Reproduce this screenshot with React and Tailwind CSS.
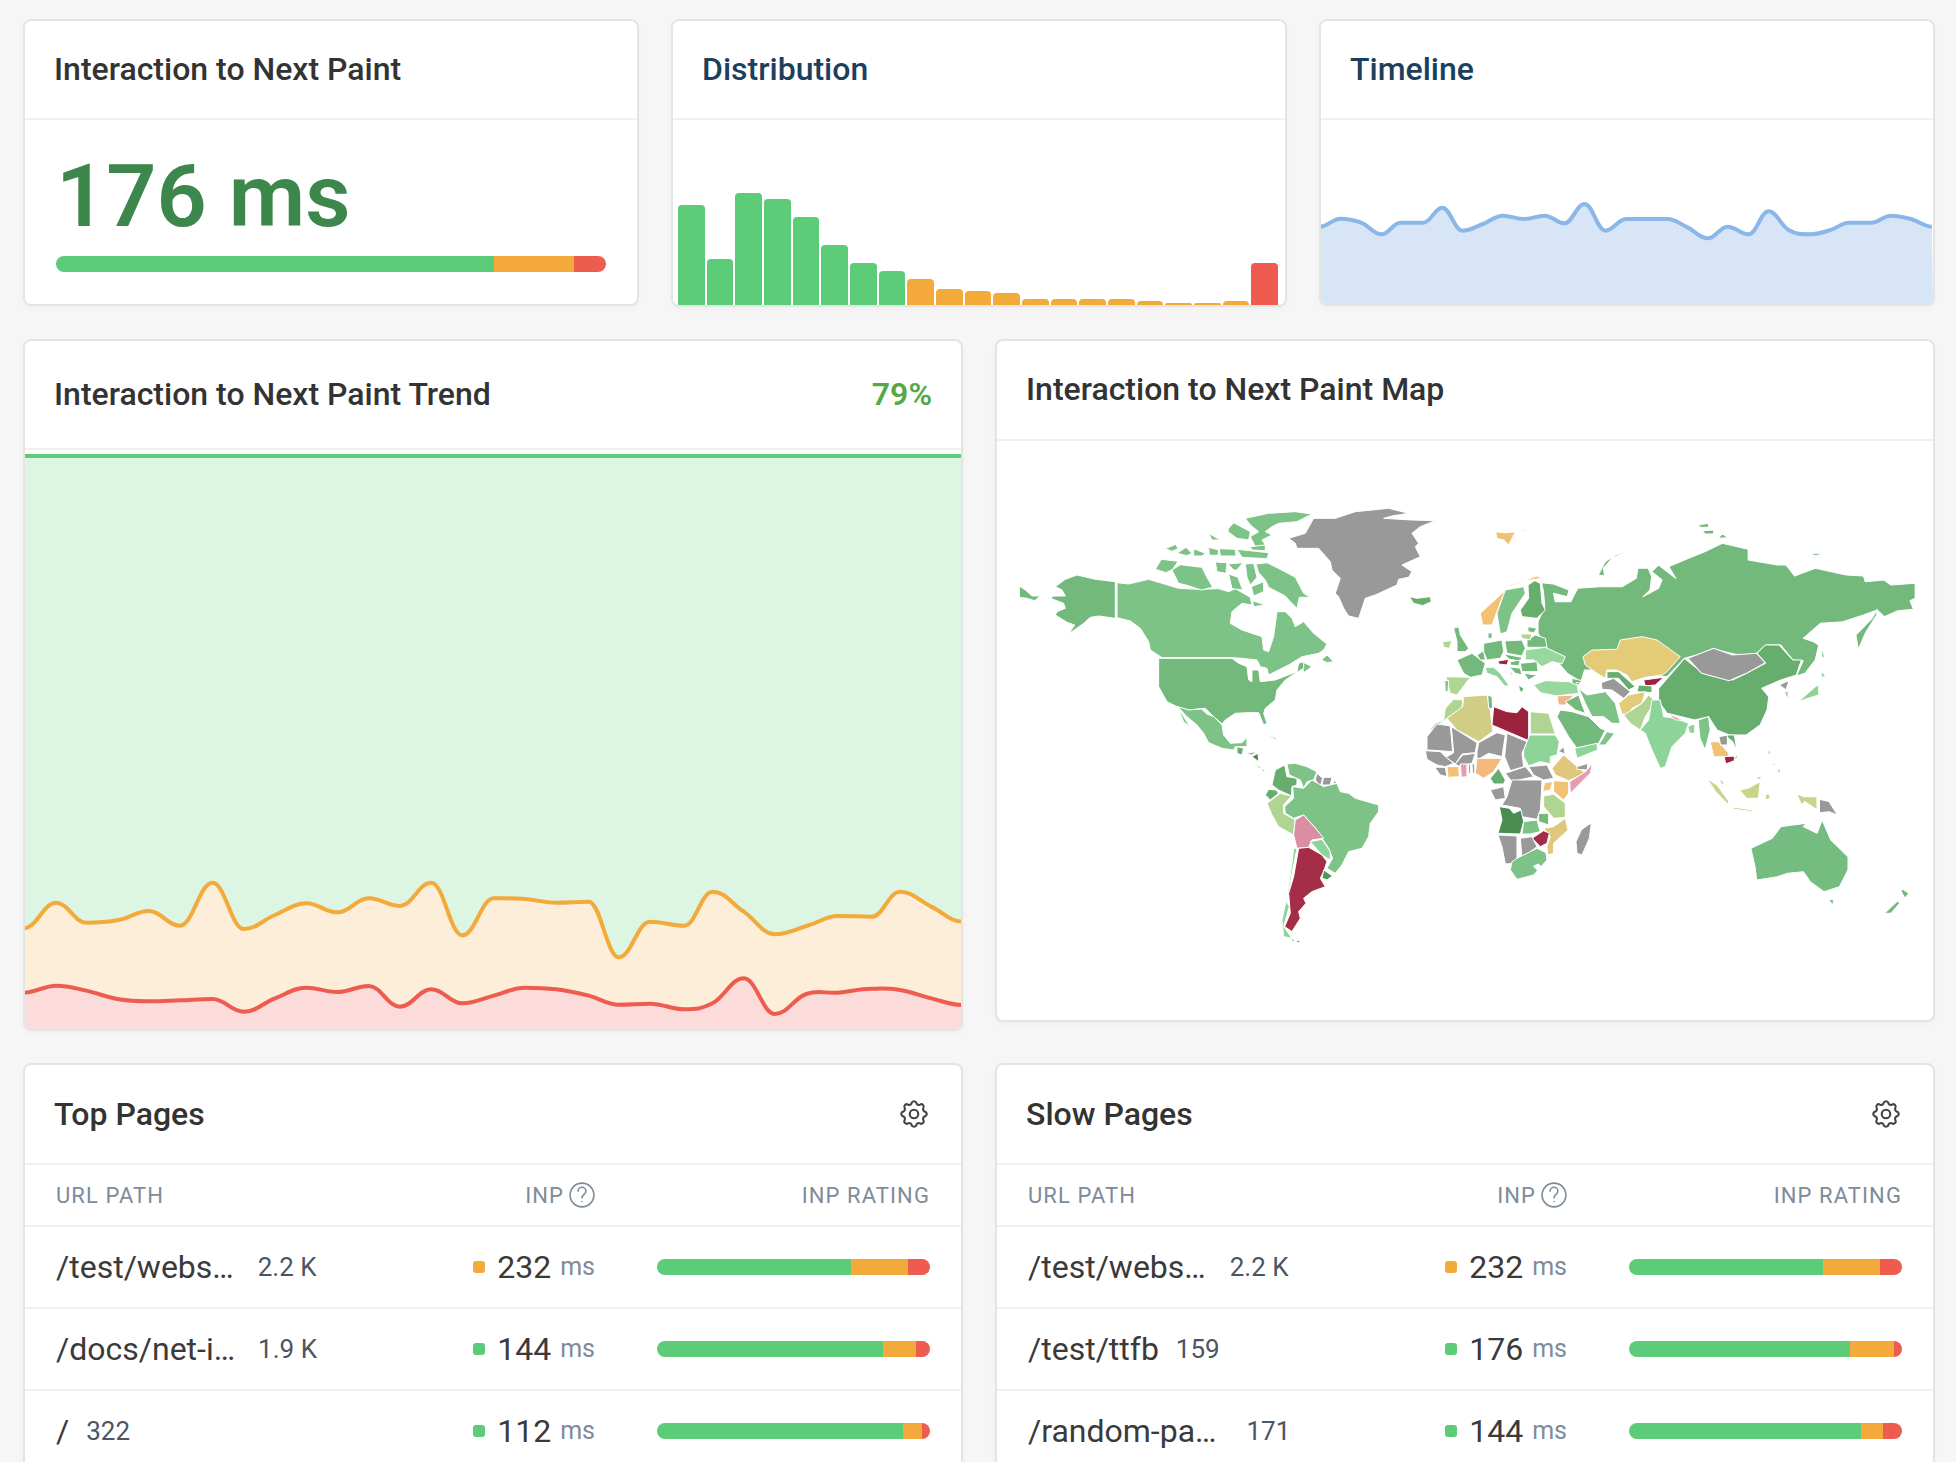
import { TbSettings } from "react-icons/tb";

const GREEN = "#5dcc78";
const AMBER = "#f4a93b";
const RED = "#ee5c4f";

// monotone cubic through points, flat at local peaks
const smooth = (pts) => {
    const slope = (i) => {
        if (i === 0 || i === pts.length - 1) return 0;
        const a = pts[i][1] - pts[i - 1][1];
        const b = pts[i + 1][1] - pts[i][1];
        if (a * b <= 0) return 0;
        return (a + b) / (pts[i + 1][0] - pts[i - 1][0]);
    };
    let d = `M${pts[0][0]},${pts[0][1]}`;
    for (let i = 1; i < pts.length; i++) {
        const [x0, y0] = pts[i - 1];
        const [x1, y1] = pts[i];
        const h = (x1 - x0) * 0.4;
        d += ` C${x0 + h},${y0 + slope(i - 1) * h} ${x1 - h},${y1 - slope(i) * h} ${x1},${y1}`;
    }
    return d;
};

const orangeLine = [[38,295],[90,218],[138,278],[190,270],[238,243],[288,287],[340,158],[390,297],[440,255],[490,220],[540,247],[590,205],[640,228],[690,158],[740,316],[790,205],[840,207],[890,218],[942,215],[990,382],[1040,275],[1095,287],[1140,185],[1190,245],[1240,313],[1295,285],[1340,258],[1395,260],[1440,185],[1490,230],[1540,275]];
const redLine = [[38,488],[90,467],[138,482],[190,508],[238,514],[288,511],[340,507],[390,545],[440,505],[490,473],[540,486],[590,468],[640,530],[690,478],[740,520],[790,497],[840,473],[890,478],[942,497],[990,524],[1040,521],[1095,538],[1140,520],[1190,445],[1240,552],[1290,492],[1340,488],[1395,476],[1440,480],[1490,505],[1540,525]];
const blueLine = [[48,680],[97,656],[146,668],[195,703],[240,668],[295,668],[340,623],[388,692],[437,672],[485,647],[535,657],[585,647],[632,670],[680,612],[730,692],[780,657],[828,657],[878,657],[927,683],[975,715],[1022,680],[1072,703],[1120,634],[1168,690],[1218,703],[1268,690],[1312,668],[1365,668],[1412,647],[1460,657],[1510,680]];

const toTrend = (p) => [p[0] / 1.6 - 25, 830 + p[1] / 3 - 450];
const toTimeline = (p) => [1300 + p[0] / 2.39 - 1321, p[1] / 3 - 120];

const bars = [
    [100, GREEN], [46, GREEN], [112, GREEN], [106, GREEN], [88, GREEN], [60, GREEN], [42, GREEN], [34, GREEN],
    [26, AMBER], [16, AMBER], [14, AMBER], [12, AMBER], [6, AMBER], [6, AMBER], [6, AMBER], [6, AMBER], [4, AMBER], [2, AMBER], [2, AMBER], [4, AMBER],
    [42, RED],
];

const C = {
    can: "#7dc287", usa: "#73b97c", grey: "#999999", chn: "#66ad6e", arg: "#a42e48", lby: "#9b233e", kaz: "#e4cb78",
    alg: "#d0ce85", lime: "#b0d592", pink: "#d98ea3", ago: "#4a8d50", amb: "#f2c173", nga: "#f3ba7c", mint: "#8ed498",
    som: "#e69db0", ury: "#4a9a5a", pale: "#98d89f", ind: "#c9d38a", eth: "#e0c77c", syr: "#f0b58a",
};

// coordinates read off the reference, one group per crop
const americas = [
    [C.usa, "160,290 190,268 225,255 280,268 340,275 340,385 290,378 265,382 245,400 200,432 218,405 195,397 160,375 165,365 190,355 185,340 145,325 155,318 190,318 180,300 155,287"],
    [C.usa, "52,288 70,300 90,318 115,318 98,332 75,325 52,322"],
    [C.can, "345,278 380,282 440,268 480,280 530,295 590,298 650,296 680,305 700,296 745,322 750,345 720,340 690,365 685,400 720,420 780,440 785,480 800,485 815,440 825,365 850,365 870,385 880,410 905,395 935,430 975,462 965,480 950,490 900,500 860,525 800,555 795,535 775,530 765,510 720,505 690,503 480,503 445,480 440,455 415,415 385,393 345,383"],
    [C.can, "730,85 800,70 880,65 930,72 885,95 830,100 810,110 790,125 810,135 780,150 790,165 760,170 745,140 770,125 745,105"],
    [C.can, "680,115 695,98 745,125 740,150 705,145 678,125"],
    [C.can, "620,130 655,150 630,150"],
    [C.can, "745,170 790,165 790,182 750,180"],
    [C.can, "490,176 522,163 528,176 510,184"],
    [C.can, "525,190 552,172 570,190 555,197"],
    [C.can, "575,176 610,190 600,198 575,198"],
    [C.can, "620,172 650,180 648,196 622,196"],
    [C.can, "652,176 700,178 702,198 655,198"],
    [C.can, "705,178 800,188 796,206 720,202"],
    [C.can, "460,238 478,208 528,214 512,238 492,248"],
    [C.can, "510,240 535,224 600,232 615,262 632,292 598,300 555,286 530,280"],
    [C.can, "640,216 675,218 672,250 645,245"],
    [C.can, "678,222 722,218 705,240 695,240"],
    [C.can, "680,252 708,262 722,300 690,296"],
    [C.can, "730,222 755,220 765,262 745,285 735,262"],
    [C.can, "762,222 795,218 835,238 880,262 905,310 925,322 892,322 885,355 865,335 850,318 800,292 790,270 770,248"],
    [C.can, "748,290 785,275 785,305 755,318"],
    [C.can, "752,332 790,345 755,350"],
    [C.can, "958,510 975,495 995,515 975,518"],
    [C.can, "900,515 930,530 905,548"],
    [C.grey, "860,145 910,130 935,85 1000,85 1060,65 1160,55 1220,70 1170,78 1145,85 1230,90 1300,92 1255,110 1230,130 1250,160 1240,170 1255,200 1200,225 1230,245 1220,262 1190,268 1185,285 1120,315 1090,325 1070,385 1040,378 1025,355 1010,320 1000,310 1015,265 990,240 985,215 950,175 885,175 880,160"],
    [C.chn, "1222,320 1245,325 1285,320 1288,335 1262,347 1235,340"],
    [C.usa, "470,505 690,505 710,520 735,530 740,570 750,575 750,540 770,540 775,575 820,570 885,545 890,520 905,515 905,535 880,550 850,570 825,600 820,630 790,655 785,670 795,700 785,705 770,668 740,668 700,670 670,690 660,702 635,680 610,655 560,660 525,650 495,635 470,590"],
    [C.can, "527,650 560,660 598,657 615,672 635,680 660,705 665,735 685,760 720,758 735,742 735,770 700,770 695,780 660,775 620,758 605,730 585,705 555,680"],
    [C.can, "527,652 545,680 565,712 545,695"],
    [C.chn, "705,770 725,775 720,795 705,790"],
    [C.grey, "730,790 765,785 750,795"],
    ["#3f8a4a", "750,800 768,790 770,815"],
    [C.can, "760,820 780,835 772,835"],
    [C.arg, "778,835 792,845 785,845"],
    [C.pink, "787,730 825,745 820,748"],
    [C.chn, "820,840 848,825 855,860 885,865 885,885 870,890 868,918 830,900 810,885"],
    [C.can, "855,822 880,820 915,830 945,845 935,870 915,875 905,895 895,870 862,855"],
    [C.grey, "945,850 962,865 955,890 940,870"],
    [C.grey, "965,862 990,862 985,885 960,885"],
    [C.grey, "995,870 1010,885 995,880"],
    [C.chn, "800,898 822,900 830,910 805,930 790,915"],
    [C.lime, "795,940 835,910 868,918 845,945 845,970 880,990 875,1035 830,1010 810,975"],
    [C.can, "872,890 905,895 930,870 965,890 1005,880 1015,905 1040,910 1060,925 1130,945 1130,965 1105,1000 1100,1040 1080,1075 1040,1085 1020,1125 1000,1150 975,1135 992,1105 980,1075 960,1045 945,1020 905,975 875,985 850,970 848,950 875,925"],
    [C.pink, "880,990 905,975 945,1020 965,1045 930,1050 920,1072 885,1075 875,1035"],
    [C.mint, "925,1055 960,1048 985,1085 985,1110 960,1095"],
    [C.mint, "875,1075 885,1075 870,1150 860,1210 850,1230 862,1250 845,1310 870,1345 845,1340 840,1290 855,1220 870,1120"],
    [C.arg, "890,1075 920,1072 960,1095 975,1115 965,1145 955,1165 970,1190 930,1205 905,1225 912,1240 890,1265 895,1285 870,1325 848,1310 865,1270 860,1210 875,1160"],
    [C.ury, "965,1140 992,1158 975,1170 960,1165"],
    [C.mint, "870,1345 880,1355 868,1355"],
    [C.arg, "885,1350 900,1358 885,1358"],
];

const asia = [
    [C.usa, "395,395 415,350 410,300 405,278 440,282 485,300 480,320 440,310 445,335 490,335 510,295 575,290 640,290 680,265 685,235 715,235 725,260 720,300 700,320 745,295 755,270 725,245 745,225 795,265 775,230 820,210 880,185 930,160 1005,178 1005,210 1090,225 1115,225 1140,258 1200,235 1290,255 1340,258 1345,275 1400,270 1420,285 1490,280 1490,325 1475,332 1485,358 1440,362 1400,380 1380,360 1340,375 1280,395 1215,400 1165,445 1195,455 1210,465 1200,510 1170,550 1145,558 1165,512 1135,510 1100,465 1060,465 1050,495 1025,490 1000,500 915,480 875,490 820,505 770,560 600,540 530,540 520,575 480,550 430,490 395,430"],
    [C.usa, "1318,435 1365,385 1380,358 1378,375 1345,430 1325,478"],
    [C.usa, "570,255 590,215 620,195 680,172 610,205 585,235 588,258"],
    [C.usa, "860,105 890,100 890,112 865,112"],
    [C.usa, "872,122 905,120 905,132 880,132"],
    [C.usa, "918,145 930,130 945,143"],
    [C.usa, "1182,190 1230,190 1200,197"],
    [C.amb, "272,125 300,128 330,125 310,165 295,150 275,145"],
    [C.amb, "340,120 380,118 350,125"],
    [C.chn, "745,595 770,565 820,505 850,530 895,555 960,570 1000,550 1055,520 1030,490 1055,465 1095,465 1135,510 1160,510 1145,555 1100,570 1045,595 1065,620 1060,660 1040,705 1000,735 950,735 915,720 890,680 850,690 770,670 745,635"],
    [C.grey, "830,505 905,475 960,495 1030,490 1055,518 1000,550 950,572 870,550"],
    [C.grey, "1095,585 1125,570 1115,600"],
    [C.mint, "1110,605 1122,605 1120,630"],
    [C.mint, "1150,635 1200,590 1210,585 1210,615 1180,625"],
    [C.mint, "1215,545 1230,555 1220,565"],
    [C.mint, "1220,470 1228,505 1218,500"],
    [C.can, "860,690 890,680 895,720 880,780 865,745"],
    [C.mint, "830,710 850,700 850,730 835,730"],
    [C.amb, "895,755 920,755 950,790 945,800 905,800"],
    [C.chn, "935,735 965,735 975,800 950,830 975,790 960,755"],
    [C.grey, "920,740 945,735 945,765 925,765"],
    [C.lby, "935,800 965,798 965,812 940,822"],
    [C.ind, "885,865 915,885 950,935 945,942 910,905"],
    [C.ind, "955,950 1018,960 1018,965 965,958"],
    [C.ind, "980,900 1005,895 1040,875 1035,925 1000,925"],
    [C.mint, "1020,865 1045,858 1040,868"],
    [C.mint, "920,860 935,880 928,885"],
    [C.ind, "1055,915 1065,910 1070,925 1055,930"],
    [C.ind, "1145,910 1165,920 1205,920 1205,960 1170,935 1160,945"],
    [C.grey, "1212,928 1240,935 1265,975 1240,965 1212,968"],
    [C.mint, "1065,770 1070,790 1062,795"],
    [C.mint, "1075,815 1085,825 1078,828"],
    [C.mint, "1090,840 1100,835 1095,855"],
    ["#75bc80", "1013,1075 1075,1045 1100,1010 1135,1005 1175,1000 1165,1010 1205,1030 1220,990 1245,1050 1295,1100 1295,1140 1270,1190 1225,1205 1185,1175 1165,1145 1120,1150 1090,1160 1030,1170 1025,1130"],
    ["#75bc80", "1238,1228 1255,1230 1250,1245"],
    [C.usa, "1450,1195 1472,1210 1460,1225 1450,1205"],
    [C.usa, "1400,1270 1440,1232 1445,1240 1420,1270"],
];

const emea = [
    [C.lime, "62,245 90,242 82,265 65,262"],
    [C.usa, "95,205 110,200 115,225 140,265 130,275 105,275 105,245"],
    [C.usa, "105,300 150,280 190,310 180,345 145,352 125,340"],
    [C.usa, "165,285 185,272 190,300 175,300"],
    [C.lime, "72,350 145,352 120,385 105,405 85,400"],
    [C.can, "68,362 80,362 78,395 70,395"],
    [C.amb, "175,160 240,100 260,85 265,75 345,48 362,55 310,62 262,80 240,115 210,195 182,195"],
    [C.can, "250,90 305,80 310,100 270,160 255,215 235,222 225,160"],
    [C.chn, "318,75 338,62 355,70 360,130 370,150 345,175 300,170 295,150 320,115"],
    [C.usa, "198,220 210,218 210,235 198,235"],
    [C.usa, "185,250 240,240 245,275 235,295 195,300 185,275"],
    [C.usa, "248,243 300,240 310,265 300,288 255,280"],
    [C.usa, "315,240 340,225 370,235 375,262 315,262"],
    [C.usa, "318,200 345,205 335,218 318,215"],
    [C.lime, "295,222 330,222 325,240 300,235"],
    [C.pale, "310,270 370,262 430,290 420,312 390,305 360,320 335,300 310,300"],
    [C.usa, "295,310 345,305 348,335 300,335"],
    [C.usa, "245,282 262,285 300,292 295,303 262,298"],
    [C.mint, "190,322 215,322 235,340 262,378 248,378 225,350 195,340"],
    [C.lby, "228,303 260,298 255,315 230,312"],
    [C.usa, "265,305 295,300 290,318 265,315"],
    [C.usa, "305,340 345,345 320,360"],
    [C.usa, "262,320 295,325 300,345 280,340"],
    [C.chn, "290,375 305,385 300,398 292,390"],
    [C.amb, "258,332 272,340 270,348"],
    [C.pale, "335,375 370,362 440,365 465,372 470,400 405,408 355,398"],
    [C.syr, "405,408 455,405 430,435 410,435"],
    [C.usa, "430,425 470,405 490,460 460,450"],
    [C.can, "470,385 495,405 550,395 580,430 595,490 570,490 545,470 510,470 490,430"],
    [C.usa, "405,470 415,450 450,455 500,470 535,505 550,510 530,550 465,565 440,530"],
    [C.mint, "458,565 525,550 527,570 465,595"],
    [C.can, "530,555 555,515 578,520 550,555"],
    [C.usa, "450,355 480,362 470,375 450,370"],
    [C.lby, "462,368 472,368 470,376"],
    [C.kaz, "483,290 510,270 585,268 595,240 660,230 705,240 775,290 735,335 720,345 670,352 630,365 615,345 585,330 555,330 550,355 525,340 490,315"],
    [C.chn, "555,335 590,335 640,380 620,390 590,355 555,355"],
    [C.grey, "538,368 575,355 625,395 605,415 570,390 540,388"],
    [C.lby, "665,360 725,352 700,375 670,378"],
    [C.chn, "650,375 690,378 690,398 645,395"],
    [C.kaz, "590,430 620,405 670,395 660,430 630,445 625,465 600,462"],
    [C.lime, "605,465 630,450 660,430 680,405 700,425 670,470 655,510 625,490"],
    [C.mint, "690,420 715,420 725,470 760,475 800,490 790,520 750,560 730,620 715,625 690,570 670,520 655,510 680,480"],
    [C.som, "738,462 785,480 760,480"],
    [C.lime, "15,520 40,490 65,480 70,445 95,418 122,420 120,445 75,475"],
    [C.alg, "75,475 122,440 125,410 195,405 205,450 212,515 170,545 105,510"],
    [C.usa, "197,405 210,410 212,445 200,445"],
    [C.lby, "215,440 255,455 285,458 300,440 320,455 320,542 250,512 210,495"],
    [C.lime, "325,455 380,460 400,522 325,522"],
    [C.mint, "323,525 400,525 412,545 405,585 385,590 385,612 355,605 320,618 305,590 305,570"],
    [C.grey, "15,530 45,492 85,498 92,575 50,572 15,570"],
    [C.grey, "88,500 165,548 160,578 120,582 100,612 72,592 95,578"],
    [C.grey, "170,548 225,518 250,525 240,590 200,580 165,600 165,575"],
    [C.grey, "255,520 315,545 300,580 305,620 265,632 248,590"],
    [C.grey, "10,572 55,575 72,592 95,610 70,620 45,615 15,598"],
    [C.grey, "38,622 70,622 75,650 55,645"],
    [C.grey, "100,612 122,585 160,580 150,610 110,618"],
    [C.amb, "75,620 110,620 112,650 78,652"],
    [C.som, "115,612 135,612 135,650 118,652"],
    [C.grey, "140,612 146,612 146,640 140,640"],
    [C.grey, "150,612 158,612 158,640 152,640"],
    [C.nga, "165,595 240,595 215,635 185,655 160,640"],
    [C.chn, "230,625 250,660 245,672 215,672 205,655"],
    [C.grey, "250,640 310,620 335,650 270,665"],
    [C.grey, "320,620 375,615 395,655 365,660 335,645"],
    [C.eth, "390,625 425,585 460,615 490,640 440,662 400,645"],
    [C.grey, "410,575 425,560 430,582"],
    [C.grey, "465,620 498,610 495,630 465,628"],
    [C.som, "512,610 505,640 465,680 445,700 443,665 490,635"],
    [C.amb, "395,662 440,665 440,700 425,720 395,695"],
    [C.amb, "368,668 392,665 385,690 362,695"],
    [C.lime, "365,708 395,703 430,730 430,772 395,775 365,740"],
    [C.grey, "270,660 360,660 358,705 355,750 345,778 300,770 295,745 240,735 255,710"],
    [C.grey, "205,690 245,680 250,715 220,720"],
    [C.ago, "232,740 262,745 275,760 297,750 305,785 295,822 228,820 240,780"],
    [C.usa, "350,760 380,760 380,795 350,785"],
    [C.can, "305,785 345,780 355,815 325,822 300,822"],
    [C.ury, "395,795 402,797 400,812 395,812"],
    [C.eth, "365,805 395,800 430,775 438,810 395,850 395,880 378,885 375,860 385,830"],
    [C.arg, "330,835 365,812 382,820 375,850 355,860"],
    [C.grey, "228,825 285,828 285,890 280,910 250,912 240,860"],
    [C.grey, "295,835 330,830 345,860 300,895"],
    [C.can, "285,895 345,865 372,878 375,900 335,945 285,958 265,930 270,905"],
    ["#ffffff", "335,918 350,912 358,922 345,930"],
    [C.grey, "498,795 508,790 502,835 480,885 465,880 462,845 478,810"],
];

const Segments = ({ good, mid }) => (
    <div className="flex h-4 w-full overflow-hidden rounded-full">
        <div className="bg-[#5dcc78]" style={{ width: `${good}%` }} />
        <div className="bg-[#f4a93b]" style={{ width: `${mid - good}%` }} />
        <div className="flex-1 bg-[#ee5c4f]" />
    </div>
);

const Card = ({ className = "", children }) => (
    <div className={`overflow-hidden rounded-[8px] border-2 border-[#e4e4e4] bg-white shadow-[0_2px_6px_rgba(0,0,0,0.03)] ${className}`}>
        {children}
    </div>
);

const CardTitle = ({ blue, className = "", children }) => (
    <div className={`flex items-center justify-between border-b-2 border-[#f0f0f0] pb-[2px] pl-[29px] pr-[30px] ${className}`}>
        <h2 className={`text-[32px] font-medium ${blue ? "text-[#1d3f5e]" : "text-[#333333]"}`}>{children}</h2>
    </div>
);

const HelpIcon = () => (
    <svg viewBox="0 0 24 24" fill="none" stroke="#7d8b9a" strokeWidth="1.5" strokeLinecap="round" className="h-[26px] w-[26px]">
        <circle cx="12" cy="12" r="11" />
        <path d="M12 18v.01M12 14.5c0-2.8 3.6-2.8 3.6-6a3.6 3.6 0 0 0-7.2 0" />
    </svg>
);

const PagesCard = ({ title, rows }) => (
    <Card className="h-[420px]">
        <div className="flex h-[98px] items-center justify-between pl-[29px] pr-[30px]">
            <h2 className="text-[32px] font-medium text-[#333333]">{title}</h2>
            <TbSettings className="text-[34px] text-[#444444]" strokeWidth={1.5} />
        </div>
        <div className="flex h-[64px] items-center border-y-2 border-[#f0f0f0] pl-[31px] pr-[31px] text-[22px] tracking-[0.05em] text-[#7d8b9a]">
            <div className="flex-1">URL PATH</div>
            <div className="flex items-center gap-[5px]">INP <HelpIcon /></div>
            <div className="w-[335px] text-right">INP RATING</div>
        </div>
        {rows.map((row) => (
            <div key={row.path} className="flex h-[82px] items-center border-b-2 border-[#f0f0f0] pl-[31px] pr-[31px]">
                <div className="flex flex-1 items-center">
                    <span className="text-[32px] text-[#3a3a3a]">{row.path}</span>
                    <span className={`text-[26px] text-[#4b5563] ${row.gap}`}>{row.count}</span>
                </div>
                <div className="flex items-center">
                    <span className={`mr-3 inline-block h-3 w-3 rounded-[3px] ${row.slow ? "bg-[#f4a93b]" : "bg-[#5dcc78]"}`} />
                    <span className="text-[32px] text-[#3a3a3a]">{row.inp}</span>
                    <span className="ml-[9px] text-[25px] text-[#7d8b9a]">ms</span>
                </div>
                <div className="ml-[62px] w-[273px]">
                    <Segments good={row.good} mid={row.mid} />
                </div>
            </div>
        ))}
    </Card>
);

const topPages = [
    { path: "/test/webs…", count: "2.2 K", inp: 232, slow: true, good: 71, mid: 92, gap: "ml-[24px]" },
    { path: "/docs/net-i…", count: "1.9 K", inp: 144, good: 82.8, mid: 94.9, gap: "ml-[23px]" },
    { path: "/", count: "322", inp: 112, good: 90, mid: 97, gap: "ml-[17px]" },
];

const slowPages = [
    { path: "/test/webs…", count: "2.2 K", inp: 232, slow: true, good: 70.9, mid: 92, gap: "ml-[24px]" },
    { path: "/test/ttfb", count: "159", inp: 176, good: 80.8, mid: 97, gap: "ml-[17px]" },
    { path: "/random-pa…", count: "171", inp: 144, good: 84.9, mid: 93, gap: "ml-[30px]" },
];

const WorldMap = () => (
    <svg viewBox="995 441 936 579" className="block h-[579px] w-full" stroke="#ffffff" strokeWidth="3" strokeLinejoin="round">
        <g transform="translate(1000 490) scale(0.3333)">
            {americas.map(([c, p], i) => <polygon key={i} fill={c} points={p} />)}
        </g>
        <g transform="translate(1400 490) scale(0.3444 0.3333)">
            {asia.map(([c, p], i) => <polygon key={i} fill={c} points={p} />)}
        </g>
        <g transform="translate(1420 560) scale(0.3333)">
            {emea.map(([c, p], i) => <polygon key={i} fill={c} points={p} />)}
        </g>
    </svg>
);

export default function App() {
    const orange = orangeLine.map(toTrend);
    const red = redLine.map(toTrend);
    const blue = blueLine.map(toTimeline);
    const orangeD = smooth(orange);
    const redD = smooth(red);
    const blueD = smooth(blue);

    return (
        <div className="h-[1462px] overflow-hidden bg-[#f6f6f6] pl-[23px] pr-[21px] pt-[19px] font-['Roboto',sans-serif]">
            <div className="grid grid-cols-3 items-start gap-8">
                <Card className="h-[287px]">
                    <CardTitle className="h-[99px]">Interaction to Next Paint</CardTitle>
                    <div className="pl-[31px] pr-[30px] pt-[32px]">
                        <div className="text-[88px] font-semibold leading-[88px] text-[#3d864c]">176 ms</div>
                        <div className="mt-[16px] w-[550px]">
                            <Segments good={79.6} mid={94.2} />
                        </div>
                    </div>
                </Card>
                <Card className="h-[288px]">
                    <CardTitle blue className="h-[99px]">Distribution</CardTitle>
                    <div className="flex h-[185px] items-end gap-[2px] pl-[5px] pr-[7px]">
                        {bars.map(([h, color], i) => (
                            <div key={i} className="flex-1 rounded-t-[4px]" style={{ height: h, background: color }} />
                        ))}
                    </div>
                </Card>
                <Card className="h-[287px]">
                    <CardTitle blue className="h-[99px]">Timeline</CardTitle>
                    <svg viewBox="0 0 612 184" preserveAspectRatio="none" className="block h-[184px] w-full">
                        <path d={`${blueD} L612,184 L0,184 Z`} fill="#d8e5f6" />
                        <path d={blueD} fill="none" stroke="#8ab6e8" strokeWidth="4" />
                    </svg>
                </Card>
            </div>

            <div className="mt-8 grid grid-cols-2 items-start gap-8">
                <Card className="h-[692px]">
                    <div className="flex h-[109px] items-center justify-between border-b-2 border-[#f0f0f0] pb-[2px] pl-[29px] pr-[29px]">
                        <h2 className="text-[32px] font-medium text-[#333333]">Interaction to Next Paint Trend</h2>
                        <span className="text-[32px] font-semibold text-[#55a846]">79%</span>
                    </div>
                    <svg viewBox="0 0 936 579" preserveAspectRatio="none" className="block h-[579px] w-full">
                        <rect x="0" y="6" width="936" height="573" fill="#ddf5e3" />
                        <path d={`${orangeD} L936,579 L-1,579 Z`} fill="#fdeed9" />
                        <path d={`${redD} L936,579 L-1,579 Z`} fill="#fbdcdb" />
                        <path d="M0,6 H936" stroke="#5dcc78" strokeWidth="4" />
                        <path d={orangeD} fill="none" stroke="#f4a93b" strokeWidth="4" />
                        <path d={redD} fill="none" stroke="#ee5c4f" strokeWidth="4" />
                    </svg>
                </Card>
                <Card className="h-[683px]">
                    <CardTitle className="h-[100px]">Interaction to Next Paint Map</CardTitle>
                    <WorldMap />
                </Card>
            </div>

            <div className="mt-8 grid grid-cols-2 items-start gap-8">
                <PagesCard title="Top Pages" rows={topPages} />
                <PagesCard title="Slow Pages" rows={slowPages} />
            </div>
        </div>
    );
}
